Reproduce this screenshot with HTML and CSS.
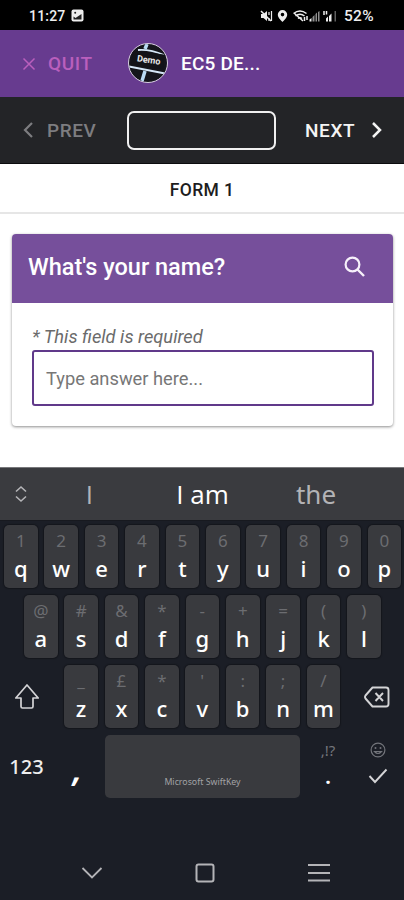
FILE: index.html
```html
<!DOCTYPE html>
<html lang="en">
<head>
<meta charset="utf-8">
<title>EC5 Demo</title>
<link rel="stylesheet" href="styles.css">
</head>
<body>
<div class="status">
  <span class="clock">11:27</span>
  <svg class="pic" width="13" height="13" viewBox="0 0 13 13"><rect x=".5" y=".5" width="12" height="12" rx="2" fill="#eee"/><path d="M2.500 10V7.500l2 1.500L10.500 5v5.500h-8z" fill="#222"/><circle cx="4.200" cy="3.800" r="1" fill="#222"/></svg>
  <svg class="tray" width="80" height="14" viewBox="0 0 80 14">
    <g fill="#eee"><path d="M1 5h2.500L7 2v10L3.500 9H1z"/><path d="M22.500 1a4.700 4.700 0 0 0-4.700 4.700c0 3 4.700 7.300 4.700 7.300s4.700-4.300 4.700-7.300A4.700 4.700 0 0 0 22.500 1zm0 2.800a1.800 1.800 0 1 1 0 3.600 1.800 1.800 0 0 1 0-3.600z"/><path d="M49.500 12.500v-2l2-1.500v3.500z"/><path d="M52.500 12.500V8l2-2v6.500zM55.500 12.500V5l1.500-1.500v9zM58 12.500V3l1.500-1v10.500z" opacity=".6"/><path d="M66 12.500V9.500l2-2v5zM69 12.500V7l2.500-2.500v8z"/><path d="M74.500 12.500V2H76v10.500z" opacity=".4"/></g>
    <g fill="none" stroke="#eee" stroke-width="1.500"><path d="M1 2l10 10"/><path d="M9 3v3M9 9v3M11.500 2v10" stroke-width="1.200"/><path d="M33.500 4.500q6.500-5 13 0M35.500 7q4.500-3.500 9 0M38 9.500q2-1.500 4 0M34 4l9 8"/><path d="M44.500 8v4M47 7v4M64 2v4M66.500 2v3.500"/></g>
  </svg>
  <span class="battery">52%</span>
</div>
<header class="appbar">
  <svg class="quit-x" width="14" height="14" viewBox="0 0 14 14"><path d="M1.500 1.500l11 11M12.500 1.500l-11 11" stroke="#ba5fbd" stroke-width="1.500"/></svg>
  <span class="quit">QUIT</span>
  <div class="logo">
    <svg width="38" height="38" viewBox="0 0 38 38"><path d="M9 6q12-1 26 5M0 22.500l36 7" fill="none" stroke="#d5e7f7" stroke-width="1.800"/><path d="M18 0l-2 5M16 27l-3 10" fill="none" stroke="#b9dbf5" stroke-width="3.500"/><path d="M4 6.500l31 4v15L2 21z" fill="#121318"/></svg>
    <span class="logo-text">Demo</span>
  </div>
  <span class="project">EC5 DE...</span>
</header>
<nav class="pager">
  <svg class="prev-i" width="12" height="18" viewBox="0 0 12 18"><path d="M10 2L3 9l7 7" fill="none" stroke="#7d7d80" stroke-width="2.200"/></svg>
  <span class="prev">PREV</span>
  <div class="progress"></div>
  <span class="next">NEXT</span>
  <svg class="next-i" width="12" height="18" viewBox="0 0 12 18"><path d="M2 2l7 7-7 7" fill="none" stroke="#f4f4f4" stroke-width="2.500"/></svg>
</nav>
<div class="form-name">FORM 1</div>
<main class="content">
  <section class="card">
    <div class="card-head">
      <h1>What's your name?</h1>
      <svg width="22" height="22" viewBox="0 0 22 22"><circle cx="8.500" cy="8.500" r="6.900" fill="none" stroke="#f6f0fa" stroke-width="2.200"/><path d="M13.500 13.500l6.500 6.500" stroke="#f6f0fa" stroke-width="2.400"/></svg>
    </div>
    <div class="card-body">
      <p class="hint">* This field is required</p>
      <div class="field">Type answer here...</div>
    </div>
  </section>
</main>
<div class="keyboard">
  <div class="suggest">
    <svg width="14" height="18" viewBox="0 0 14 18"><path d="M2 6.500L7 2l5 4.500M2 11.500L7 16l5-4.500" fill="none" stroke="#b5b5b8" stroke-width="1.600"/></svg>
    <span class="s1">I</span><span class="s2">I am</span><span class="s3">the</span>
  </div>
  <div class="row r1">
    <div class="key"><small>1</small><b>q</b></div><div class="key"><small>2</small><b>w</b></div><div class="key"><small>3</small><b>e</b></div><div class="key"><small>4</small><b>r</b></div><div class="key"><small>5</small><b>t</b></div><div class="key"><small>6</small><b>y</b></div><div class="key"><small>7</small><b>u</b></div><div class="key"><small>8</small><b>i</b></div><div class="key"><small>9</small><b>o</b></div><div class="key"><small>0</small><b>p</b></div>
  </div>
  <div class="row r2">
    <div class="key"><small>@</small><b>a</b></div><div class="key"><small>#</small><b>s</b></div><div class="key"><small>&amp;</small><b>d</b></div><div class="key"><small>*</small><b>f</b></div><div class="key"><small>-</small><b>g</b></div><div class="key"><small>+</small><b>h</b></div><div class="key"><small>=</small><b>j</b></div><div class="key"><small>(</small><b>k</b></div><div class="key"><small>)</small><b>l</b></div>
  </div>
  <div class="row r3">
    <div class="side shift"><svg width="26" height="28" viewBox="0 0 26 28"><path d="M13 2L1.800 15H7v8.500q0 1.500 1.500 1.500h9q1.500 0 1.500-1.500V15h5.200z" fill="none" stroke="#d4d4d6" stroke-width="1.700" stroke-linejoin="round"/></svg></div>
    <div class="key"><small>_</small><b>z</b></div><div class="key"><small>£</small><b>x</b></div><div class="key"><small>*</small><b>c</b></div><div class="key"><small>'</small><b>v</b></div><div class="key"><small>:</small><b>b</b></div><div class="key"><small>;</small><b>n</b></div><div class="key"><small>/</small><b>m</b></div>
    <div class="side del"><svg width="26" height="22" viewBox="0 0 26 22"><path d="M8.500 1.500H22q2.500 0 2.500 2.500v14q0 2.500-2.500 2.500H8.500L1.500 12.500q-1-1.500 0-3zM11.500 7l7.500 8M19 7l-7.500 8" fill="none" stroke="#d4d4d6" stroke-width="1.900" stroke-linejoin="round"/></svg></div>
  </div>
  <div class="row r4">
    <div class="num">123</div>
    <div class="comma">,</div>
    <div class="space">Microsoft SwiftKey</div>
    <div class="dot"><small>,!?</small><b>.</b></div>
    <div class="enter">
      <svg width="16" height="16" viewBox="0 0 16 16"><g fill="none" stroke="#73757b" stroke-width="1.200"><circle cx="8" cy="8" r="6.900"/><path d="M4.500 9.500q3.500 4 7 0z"/></g><circle cx="5.500" cy="6" r="1" fill="#73757b"/><circle cx="10.500" cy="6" r="1" fill="#73757b"/></svg>
      <svg width="20" height="16" viewBox="0 0 20 16"><path d="M1.500 8l5.500 6L18.500 1.500" fill="none" stroke="#d4d4d6" stroke-width="1.900"/></svg>
    </div>
  </div>
  <div class="sysnav">
    <svg width="22" height="14" viewBox="0 0 22 14"><path d="M1.500 2l9.500 9.500L20.500 2" fill="none" stroke="#b4b4b7" stroke-width="1.800"/></svg>
    <svg width="20" height="20" viewBox="0 0 20 20"><rect x="1.500" y="1.500" width="17" height="17" rx="2" fill="none" stroke="#b4b4b7" stroke-width="2"/></svg>
    <svg width="22" height="20" viewBox="0 0 22 20"><path d="M0 2h22M0 10h22M0 17.500h22" stroke="#b4b4b7" stroke-width="2.200"/></svg>
  </div>
</div>
</body>
</html>
```
FILE: styles.css
```css
* { box-sizing: border-box; }
body {
  margin: 0;
  width: 404px;
  height: 900px;
  display: flex;
  flex-direction: column;
  overflow: hidden;
  background: #fff;
  font-family: Roboto, sans-serif;
}
svg { display: block; flex: none; }
span, h1, p { white-space: nowrap; }

.status { height: 30px; background: #000; color: #eee; display: flex; align-items: center; padding: 1px 0 0 29px; font-size: 14px; font-weight: 500; }
.clock { width: 42px; letter-spacing: .2px; }
.tray { margin-left: 176px; }
.battery { margin-left: 4px; font-size: 15.500px; letter-spacing: .3px; }

.appbar { height: 67px; background: #673b8f; display: flex; align-items: center; padding-left: 22px; font-weight: 500; }
.quit { margin-left: 12px; width: 80px; font-size: 19px; letter-spacing: .6px; color: #ba5fbd; }
.logo { position: relative; width: 40px; height: 40px; border: 1.500px solid #d8cfe2; border-radius: 50%; overflow: hidden; background: #14151b; flex: none; margin-top: -1px; }
.logo-text { position: absolute; left: 8px; top: 10px; font-size: 9px; line-height: 12px; font-weight: 700; color: #e8e8ea; transform: rotate(8deg); }
.project { margin-left: 13px; font-size: 19px; color: #fff; letter-spacing: .2px; }

.pager { height: 67px; background: #232427; border-bottom: 1px solid #0c0c0e; display: flex; align-items: center; padding-left: 22px; font-size: 19px; font-weight: 500; }
.prev { margin-left: 13px; width: 80px; color: #7d7d80; letter-spacing: .6px; }
.progress { width: 149px; height: 39px; border: 2px solid #f0f0f0; border-radius: 7px; margin-top: 1px; }
.next { margin-left: 29px; width: 66px; color: #f4f4f4; letter-spacing: .6px; }

.form-name { height: 50px; border-bottom: 2px solid #e6e6e6; text-align: center; font-size: 17.500px; line-height: 53px; font-weight: 500; color: #1d1d1d; letter-spacing: .4px; }

.content { height: 253px; padding: 20px 11px 0 12px; }
.card { height: 192px; border-radius: 4px; background: #fff; box-shadow: 0 1px 3px rgba(0,0,0,.45); overflow: hidden; }
.card-head { height: 69px; background: #764f9b; display: flex; align-items: center; justify-content: space-between; padding: 0 27px 4px 16px; }
.card-head h1 { margin: 0; font-size: 23.500px; font-weight: 500; color: #fff; }
.card-body { padding: 22px 19px 0 20px; }
.hint { margin: 0; height: 25px; line-height: 23px; font-size: 18.300px; font-style: italic; color: #6b6b6b; }
.field { height: 56px; border: 2px solid #60398a; border-radius: 3px; padding-left: 12px; font-size: 18.300px; line-height: 53px; color: #777; }

.keyboard { height: 433px; background: #1b1e26; font-family: "Noto Sans", sans-serif; }
.suggest { height: 54px; background: #3a3b3f; border-top: 1px solid #77777a; border-bottom: 1px solid #17191f; display: grid; grid-template-columns: 14px 123px 103px 124px; align-items: center; padding-left: 14px; text-align: center; font-size: 26px; color: #b3b3b6; }
.suggest .s1, .suggest .s2 { font-family: "Open Sans", sans-serif; }
.suggest .s2 { color: #fff; font-weight: 500; }

.row { display: flex; gap: 6.800px; height: 63px; margin-bottom: 7px; }
.r1 { padding-left: 4px; margin-top: 4px; }
.r2 { padding-left: 24px; }
.r3 { padding-left: 0; }
.key { width: 33.600px; height: 63px; flex: none; border-radius: 5px; background: #393a3e; box-shadow: 0 0 1px 1px #14161c; display: flex; flex-direction: column; align-items: center; }
.key small { height: 28px; font-size: 17px; line-height: 32px; color: #6c6d71; }
.key b { font-size: 22px; line-height: 30px; font-weight: 500; color: #fff; }
.side { flex: none; height: 63px; display: flex; align-items: center; }
.shift { width: 57.500px; padding-left: 14px; }
.del { padding-left: 17px; }

.r4 { gap: 0; }
.num { width: 53px; font-size: 20px; line-height: 64px; font-weight: 500; color: #eee; text-align: center; }
.comma { width: 52px; padding-right: 3px; font-size: 34px; line-height: 68px; font-weight: 600; font-style: italic; color: #fff; text-align: center; }
.space { width: 195px; flex: none; border-radius: 5px; background: #393a3e; font-size: 8.800px; line-height: 94px; color: #a2a2a5; text-align: center; }
.dot { width: 56px; display: flex; flex-direction: column; align-items: center; color: #fff; }
.dot small { height: 29px; font-size: 15px; line-height: 30px; color: #73757b; }
.dot b { font-size: 22px; line-height: 22px; font-weight: 600; }
.enter { width: 44px; display: flex; flex-direction: column; align-items: center; gap: 10px; padding-top: 7px; }

.sysnav { display: grid; grid-template-columns: 113px 114px 113px; justify-items: center; align-items: center; padding-left: 35px; margin-top: 65px; height: 20px; }
```
